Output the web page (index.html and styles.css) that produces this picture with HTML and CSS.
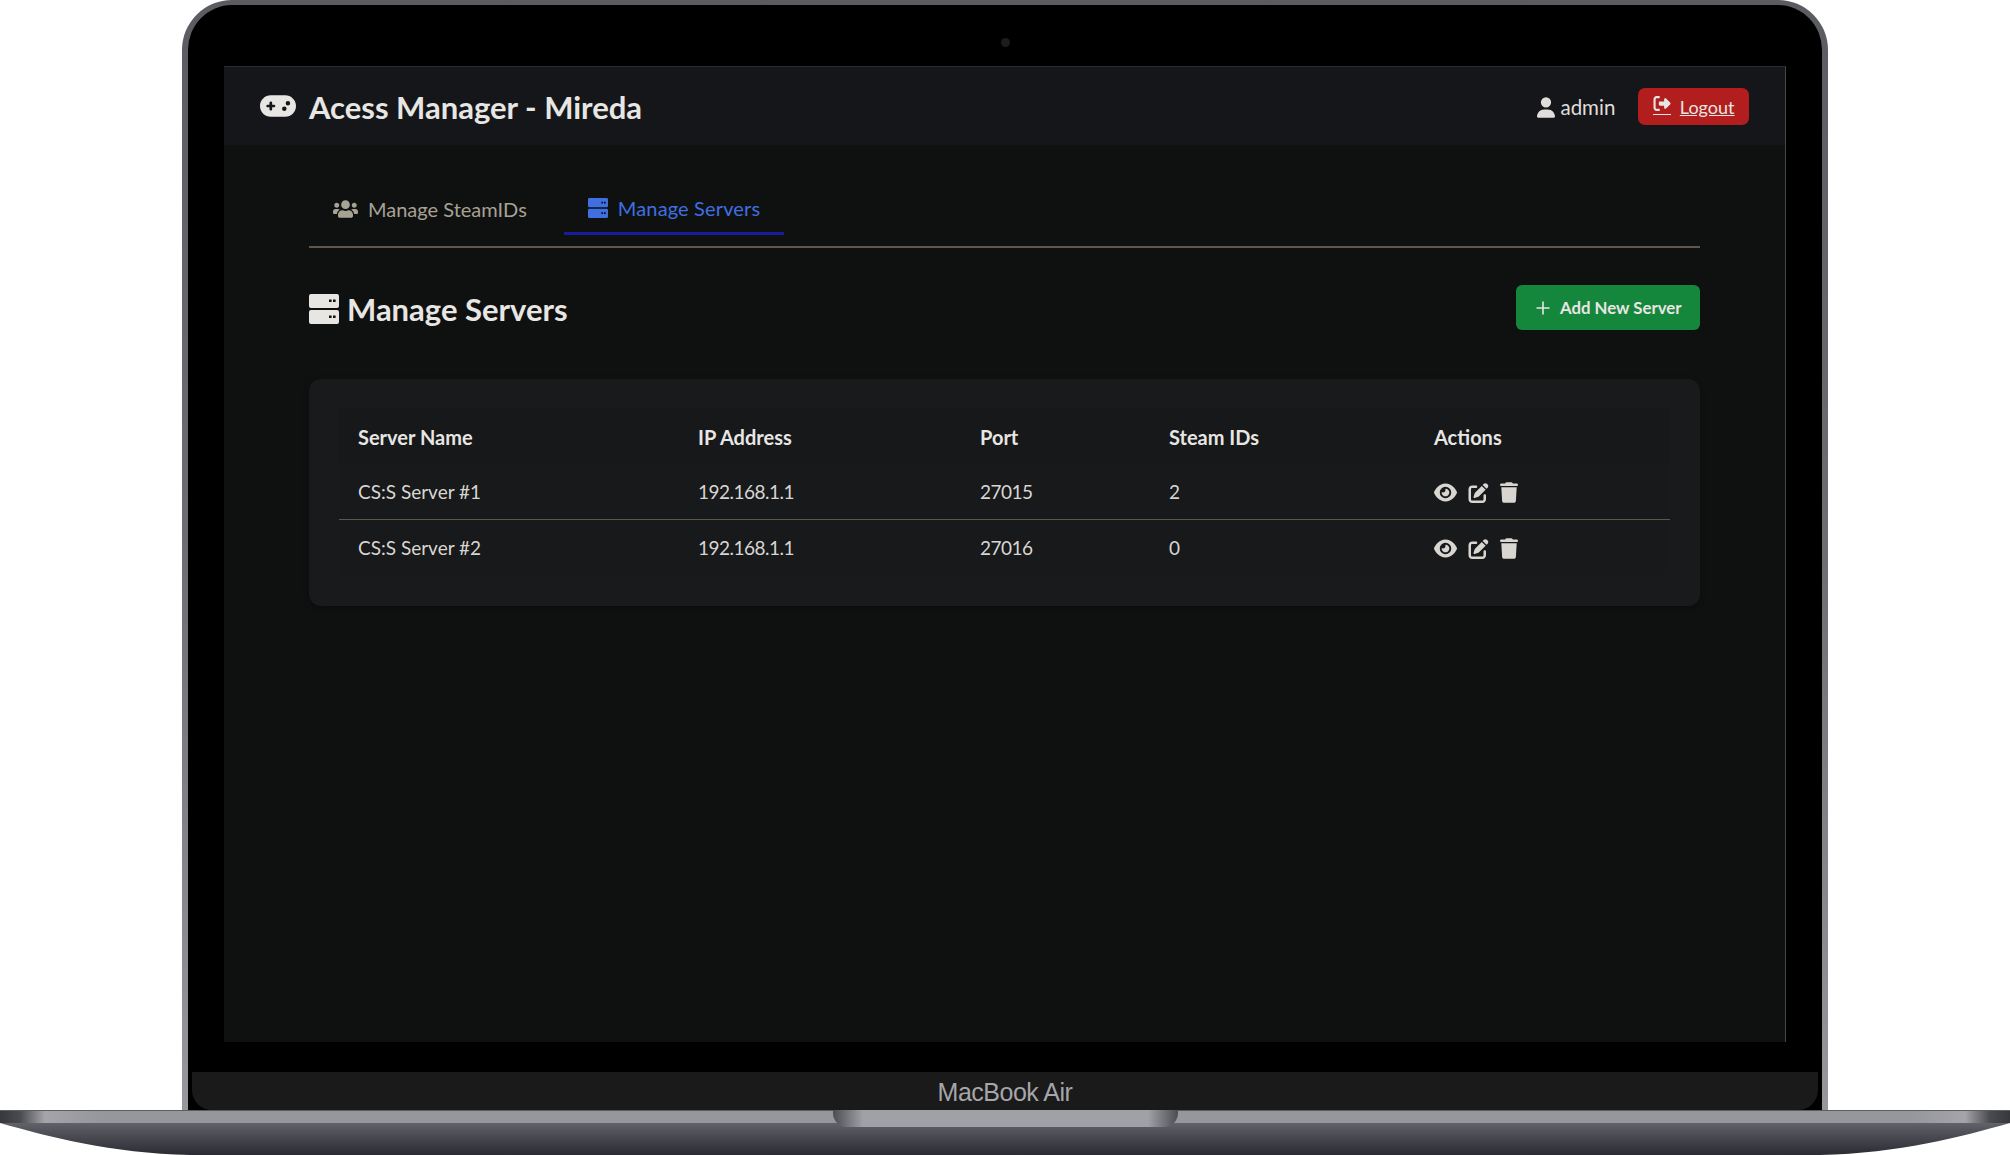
FILE: index.html
```html
<!DOCTYPE html>
<html>
<head>
  <title>Acess Manager - Mireda</title>
  <link rel="stylesheet" href="styles.css">
</head>
<body>
  <div class="lid">
    <div class="top-bezel"><span class="camera"></span></div>

    <main class="screen">
      <header class="topbar">
        <div class="brand">
          <svg class="brand-icon" viewBox="0 0 640 512"><path d="M192 64C86 64 0 150 0 256S86 448 192 448H448c106 0 192-86 192-192s-86-192-192-192H192zM496 168a40 40 0 1 1 0 80 40 40 0 1 1 0-80zM392 304a40 40 0 1 1 80 0 40 40 0 1 1 -80 0zM168 200c0-13.3 10.7-24 24-24s24 10.7 24 24v32h32c13.3 0 24 10.7 24 24s-10.7 24-24 24H216v32c0 13.3-10.7 24-24 24s-24-10.7-24-24V280H136c-13.3 0-24-10.7-24-24s10.7-24 24-24h32V200z"/></svg>
          <span>Acess Manager - Mireda</span>
        </div>
        <div class="account">
          <span class="user">
            <svg class="user-icon" viewBox="0 0 448 512"><path d="M224 256A128 128 0 1 0 224 0a128 128 0 1 0 0 256zm-45.7 48C79.8 304 0 383.8 0 482.3C0 498.7 13.3 512 29.7 512H418.3c16.4 0 29.7-13.3 29.7-29.7C448 383.8 368.2 304 269.7 304H178.3z"/></svg>
            admin
          </span>
          <a class="logout" href="#">
            <span class="logout-icon"><svg viewBox="0 0 512 512"><path d="M377.9 105.9L500.7 228.7c7.2 7.2 11.3 17.1 11.3 27.3s-4.1 20.1-11.3 27.3L377.9 406.1c-6.4 6.4-15 9.9-24 9.9c-18.7 0-33.9-15.2-33.9-33.9l0-62.1-128 0c-17.7 0-32-14.3-32-32l0-64c0-17.7 14.3-32 32-32l128 0 0-62.1c0-18.7 15.2-33.9 33.9-33.9c9 0 17.6 3.6 24 9.9zM160 96L96 96c-17.7 0-32 14.3-32 32l0 256c0 17.7 14.3 32 32 32l64 0c17.7 0 32 14.3 32 32s-14.3 32-32 32l-64 0c-53 0-96-43-96-96L0 128C0 75 43 32 96 32l64 0c17.7 0 32 14.3 32 32s-14.3 32-32 32z"/></svg></span>
            <span class="logout-text">Logout</span>
          </a>
        </div>
      </header>

      <div class="content">
        <nav class="tabs">
          <a class="tab" href="#">
            <svg class="tab-icon users" viewBox="0 0 640 512"><path d="M96 224c35.3 0 64-28.7 64-64s-28.7-64-64-64-64 28.7-64 64 28.7 64 64 64zm448 0c35.3 0 64-28.7 64-64s-28.7-64-64-64-64 28.7-64 64 28.7 64 64 64zm32 32h-64c-17.6 0-33.5 7.1-45.1 18.6 40.3 22.1 68.9 62 75.1 109.4h66c17.7 0 32-14.3 32-32v-32c0-35.3-28.7-64-64-64zm-256 0c61.9 0 112-50.1 112-112S381.9 32 320 32 208 82.1 208 144s50.1 112 112 112zm76.8 32h-8.3c-20.8 10-43.9 16-68.5 16s-47.6-6-68.5-16h-8.3C179.6 288 128 339.6 128 403.2V432c0 26.5 21.5 48 48 48h288c26.5 0 48-21.5 48-48v-28.8c0-63.6-51.6-115.2-115.2-115.2zm-223.7-13.4C161.5 263.1 145.6 256 128 256H64c-35.3 0-64 28.7-64 64v32c0 17.7 14.3 32 32 32h65.9c6.3-47.4 34.9-87.3 75.2-109.4z"/></svg>
            Manage SteamIDs
          </a>
          <a class="tab active" href="#">
            <svg class="tab-icon server" viewBox="0 0 30 30"><path d="M2 0h26a2 2 0 0 1 2 2v10a2 2 0 0 1-2 2H2a2 2 0 0 1-2-2V2a2 2 0 0 1 2-2zM20 5.5v2.6h2.6V5.5zM24 5.5v2.6h2.6V5.5zM2 16h26a2 2 0 0 1 2 2v10a2 2 0 0 1-2 2H2a2 2 0 0 1-2-2V18a2 2 0 0 1 2-2zM20 21.5v2.6h2.6v-2.6zM24 21.5v2.6h2.6v-2.6z"/></svg>
            Manage Servers
          </a>
        </nav>

        <div class="page-head">
          <h1>
            <svg class="head-icon server" viewBox="0 0 30 30"><path d="M2 0h26a2 2 0 0 1 2 2v10a2 2 0 0 1-2 2H2a2 2 0 0 1-2-2V2a2 2 0 0 1 2-2zM20 5.5v2.6h2.6V5.5zM24 5.5v2.6h2.6V5.5zM2 16h26a2 2 0 0 1 2 2v10a2 2 0 0 1-2 2H2a2 2 0 0 1-2-2V18a2 2 0 0 1 2-2zM20 21.5v2.6h2.6v-2.6zM24 21.5v2.6h2.6v-2.6z"/></svg>
            <span>Manage Servers</span>
          </h1>
          <button class="add-btn">
            <svg class="plus" viewBox="0 0 16 16"><path d="M8 1.5v13M1.5 8h13"/></svg>
            Add New Server
          </button>
        </div>

        <section class="card">
          <table>
            <thead>
              <tr>
                <th class="col-name">Server Name</th>
                <th class="col-ip">IP Address</th>
                <th class="col-port">Port</th>
                <th class="col-ids">Steam IDs</th>
                <th>Actions</th>
              </tr>
            </thead>
            <tbody>
              <tr>
                <td>CS:S Server #1</td>
                <td class="num">192.168.1.1</td>
                <td class="num">27015</td>
                <td class="num">2</td>
                <td>
                  <div class="actions">
                    <svg class="eye" viewBox="0 0 576 512"><path d="M288 32c-80.8 0-145.5 36.8-192.6 80.6C48.6 156 17.3 208 2.5 243.7c-3.3 7.9-3.3 16.7 0 24.6C17.3 304 48.6 356 95.4 399.4C142.5 443.2 207.2 480 288 480s145.5-36.8 192.6-80.6c46.8-43.5 78.1-95.4 93-131.1c3.3-7.9 3.3-16.7 0-24.6c-14.9-35.7-46.2-87.7-93-131.1C433.5 68.8 368.8 32 288 32zM144 256a144 144 0 1 1 288 0 144 144 0 1 1 -288 0zm144-64c0 35.3-28.7 64-64 64c-7.1 0-13.9-1.2-20.3-3.3c-5.5-1.8-11.9 1.6-11.7 7.4c.3 6.9 1.3 13.8 3.2 20.7c13.7 51.2 66.4 81.6 117.6 67.9s81.6-66.4 67.9-117.6c-11.1-41.5-47.8-69.4-88.6-71.1c-5.8-.2-9.2 6.1-7.4 11.7c2.1 6.4 3.3 13.2 3.3 20.3z"/></svg>
                    <svg class="edit" viewBox="0 0 512 512"><path d="M471.6 21.7c-21.9-21.9-57.3-21.9-79.2 0L362.3 51.7l97.9 97.9 30.1-30.1c21.9-21.9 21.9-57.3 0-79.2L471.6 21.7zm-299.2 220c-6.1 6.1-10.8 13.6-13.5 21.9l-29.6 88.8c-2.9 8.6-.6 18.1 5.8 24.6s15.9 8.7 24.6 5.8l88.8-29.6c8.2-2.7 15.7-7.4 21.9-13.5L437.7 172.3 339.7 74.3 172.4 241.7zM96 64C43 64 0 107 0 160V416c0 53 43 96 96 96H352c53 0 96-43 96-96V320c0-17.7-14.3-32-32-32s-32 14.3-32 32v96c0 17.7-14.3 32-32 32H96c-17.7 0-32-14.3-32-32V160c0-17.7 14.3-32 32-32h96c17.7 0 32-14.3 32-32s-14.3-32-32-32H96z"/></svg>
                    <svg class="trash" viewBox="0 0 448 512"><path d="M135.2 17.7L128 32H32C14.3 32 0 46.3 0 64S14.3 96 32 96H416c17.7 0 32-14.3 32-32s-14.3-32-32-32H320l-7.2-14.3C307.4 6.8 296.3 0 284.2 0H163.8c-12.1 0-23.2 6.8-28.6 17.7zM416 128H32L53.2 467c1.6 25.3 22.6 45 47.9 45H346.9c25.3 0 46.3-19.7 47.9-45L416 128z"/></svg>
                  </div>
                </td>
              </tr>
              <tr>
                <td>CS:S Server #2</td>
                <td class="num">192.168.1.1</td>
                <td class="num">27016</td>
                <td class="num">0</td>
                <td>
                  <div class="actions">
                    <svg class="eye" viewBox="0 0 576 512"><path d="M288 32c-80.8 0-145.5 36.8-192.6 80.6C48.6 156 17.3 208 2.5 243.7c-3.3 7.9-3.3 16.7 0 24.6C17.3 304 48.6 356 95.4 399.4C142.5 443.2 207.2 480 288 480s145.5-36.8 192.6-80.6c46.8-43.5 78.1-95.4 93-131.1c3.3-7.9 3.3-16.7 0-24.6c-14.9-35.7-46.2-87.7-93-131.1C433.5 68.8 368.8 32 288 32zM144 256a144 144 0 1 1 288 0 144 144 0 1 1 -288 0zm144-64c0 35.3-28.7 64-64 64c-7.1 0-13.9-1.2-20.3-3.3c-5.5-1.8-11.9 1.6-11.7 7.4c.3 6.9 1.3 13.8 3.2 20.7c13.7 51.2 66.4 81.6 117.6 67.9s81.6-66.4 67.9-117.6c-11.1-41.5-47.8-69.4-88.6-71.1c-5.8-.2-9.2 6.1-7.4 11.7c2.1 6.4 3.3 13.2 3.3 20.3z"/></svg>
                    <svg class="edit" viewBox="0 0 512 512"><path d="M471.6 21.7c-21.9-21.9-57.3-21.9-79.2 0L362.3 51.7l97.9 97.9 30.1-30.1c21.9-21.9 21.9-57.3 0-79.2L471.6 21.7zm-299.2 220c-6.1 6.1-10.8 13.6-13.5 21.9l-29.6 88.8c-2.9 8.6-.6 18.1 5.8 24.6s15.9 8.7 24.6 5.8l88.8-29.6c8.2-2.7 15.7-7.4 21.9-13.5L437.7 172.3 339.7 74.3 172.4 241.7zM96 64C43 64 0 107 0 160V416c0 53 43 96 96 96H352c53 0 96-43 96-96V320c0-17.7-14.3-32-32-32s-32 14.3-32 32v96c0 17.7-14.3 32-32 32H96c-17.7 0-32-14.3-32-32V160c0-17.7 14.3-32 32-32h96c17.7 0 32-14.3 32-32s-14.3-32-32-32H96z"/></svg>
                    <svg class="trash" viewBox="0 0 448 512"><path d="M135.2 17.7L128 32H32C14.3 32 0 46.3 0 64S14.3 96 32 96H416c17.7 0 32-14.3 32-32s-14.3-32-32-32H320l-7.2-14.3C307.4 6.8 296.3 0 284.2 0H163.8c-12.1 0-23.2 6.8-28.6 17.7zM416 128H32L53.2 467c1.6 25.3 22.6 45 47.9 45H346.9c25.3 0 46.3-19.7 47.9-45L416 128z"/></svg>
                  </div>
                </td>
              </tr>
            </tbody>
          </table>
        </section>
      </div>
    </main>

    <div class="chin">MacBook Air</div>
  </div>

  <div class="base">
    <div class="base-strip"></div>
    <div class="base-body"></div>
    <div class="notch"></div>
  </div>
</body>
</html>
```

FILE: styles.css
```css
html {
  background-color: #fff;
}

body {
  color: #e8e6e3;
  font: 20px/1.5 "Lato", "Open Sans", sans-serif;
  height: 1155px;
  margin: 0;
  overflow: hidden;
}

svg {
  display: block;
  fill: currentColor;
  flex: none;
}

a {
  color: inherit;
  text-decoration: none;
}

/* laptop frame */

.lid {
  background: linear-gradient(#000, #000) padding-box, linear-gradient(180deg, #5b5c61 0, #6d6e72 50%, #97989c 100%) border-box;
  border: solid transparent;
  border-width: 5px 6px 0;
  border-radius: 50px 50px 0 0;
  box-sizing: border-box;
  display: flex;
  flex-direction: column;
  height: 1110px;
  margin: 0 182px;
}

.top-bezel {
  align-items: center;
  box-sizing: border-box;
  display: flex;
  flex: none;
  height: 61px;
  justify-content: center;
  padding-top: 13px;
}

.camera {
  background-color: #1b1c20;
  border-radius: 50%;
  height: 9px;
  width: 9px;
}

.screen {
  background-color: #0f1111;
  border-right: 1px solid #45464a;
  border-top: 1px solid #2b2c30;
  box-sizing: border-box;
  display: flex;
  flex: none;
  flex-direction: column;
  height: 976px;
  margin: 0 36px;
}

.chin {
  background-color: #1a1a1a;
  border-radius: 0 0 20px 20px;
  color: #a6a6aa;
  flex: none;
  font: 25px/40px "Liberation Sans", sans-serif;
  height: 38px;
  letter-spacing: -0.5px;
  margin: 30px 4px 0;
  text-align: center;
}

.base {
  height: 45px;
  position: relative;
}

.base-strip {
  background: linear-gradient(90deg, #37383d 0, #4a4b50 20px, #a4a4aa 45px, #96979c 100px, #96979c 1910px, #a4a4aa 1965px, #4a4b50 1990px, #37383d 2010px);
  border-top: 1px solid #5c5d61;
  box-sizing: border-box;
  height: 13px;
}

.base-body {
  background: linear-gradient(180deg, #626369 0, #4b4c54 12px, #2b2c33 32px);
  clip-path: path("M0 0H2010C1960 14 1900 30 1820 32H190C110 30 50 14 0 0Z");
  height: 32px;
}

.notch {
  background: linear-gradient(90deg, #4c4d52 0, #a0a1a6 30px, #a0a1a6 315px, #4c4d52 345px);
  border-radius: 0 0 14px 14px;
  height: 17px;
  left: 833px;
  position: absolute;
  top: 0;
  width: 345px;
}

/* app header */

.topbar {
  align-items: center;
  background-color: #14161a;
  box-sizing: border-box;
  display: flex;
  flex: none;
  height: 78px;
  justify-content: space-between;
  padding: 0 36px;
}

.brand {
  align-items: center;
  display: flex;
  font-size: 31px;
  font-weight: 700;
  gap: 13px;
}

.brand span {
  padding-top: 2px;
}

.brand-icon {
  height: 30px;
  width: 36px;
}

.account {
  align-items: center;
  display: flex;
  gap: 23px;
}

.user {
  align-items: center;
  color: #e0dedb;
  display: flex;
  font-size: 20.5px;
  gap: 5px;
  padding-top: 2px;
}

.user-icon {
  height: 21px;
  width: 18px;
}

.logout {
  align-items: center;
  background-color: #b21e1e;
  border-radius: 7px;
  box-sizing: border-box;
  display: flex;
  font-size: 18px;
  gap: 9px;
  height: 37px;
  padding: 0 14.5px;
}

.logout-icon {
  border-bottom: 1px solid currentColor;
  display: block;
  margin-top: -3px;
  padding-bottom: 2px;
}

.logout-icon svg {
  height: 17px;
  width: 18px;
}

.logout-text {
  padding-top: 2px;
  text-decoration: underline;
}

/* page */

.content {
  display: flex;
  flex-direction: column;
  padding: 0 85px;
}

.tabs {
  border-bottom: 2px solid #5f574c;
  display: flex;
  gap: 13px;
  padding: 40px 0 11px;
}

.tab {
  align-items: center;
  border-bottom: 3px solid transparent;
  color: #a8a295;
  display: flex;
  font-size: 20px;
  gap: 10px;
  height: 47px;
  padding: 0 24px;
}

.tab.active {
  border-bottom-color: #1a1a9c;
  color: #3f6fe0;
  height: 45px;
  letter-spacing: 0.15px;
  padding-bottom: 2px;
}

.tab-icon {
  height: 20px;
  width: 20px;
}

.tab-icon.users {
  width: 25px;
}

.server {
  fill-rule: evenodd;
}

.page-head {
  align-items: center;
  display: flex;
  justify-content: space-between;
  margin-top: 37px;
}

h1 {
  align-items: center;
  display: flex;
  font-size: 31px;
  font-weight: 700;
  gap: 8px;
  line-height: 1.2;
  margin: 0;
}

h1 span {
  padding-top: 4px;
}

.head-icon {
  height: 30px;
  margin-top: 2px;
  width: 30px;
}

.add-btn {
  align-items: center;
  background-color: #15873d;
  border: 0;
  border-radius: 6px;
  color: #e8e6e3;
  display: flex;
  font: 700 16.8px "Lato", sans-serif;
  gap: 9px;
  height: 45px;
  padding: 0 18.5px;
}

.plus {
  fill: none;
  height: 16px;
  stroke: currentColor;
  stroke-width: 1.6;
  width: 16px;
}

.card {
  background-color: #181a1c;
  border-radius: 12px;
  box-shadow: 0 2px 6px rgba(0, 0, 0, .3);
  margin-top: 49px;
  padding: 29px 30px 31px;
}

table {
  background-color: #16181a;
  border-collapse: collapse;
  table-layout: fixed;
  width: 100%;
}

th,
td {
  font-size: 20px;
  padding: 2px 19px 0;
  text-align: left;
}

th {
  font-weight: 700;
  height: 54px;
}

td {
  color: #d9d6d2;
  font-size: 19px;
  height: 53px;
}

td.num {
  letter-spacing: -0.5px;
}

tbody tr {
  background-color: #17191b;
}

tbody tr:first-child {
  border-bottom: 1px solid #5f574c;
}

.col-name {
  width: 302px;
}

.col-ip {
  width: 244px;
}

.col-port {
  width: 151px;
}

.col-ids {
  width: 227px;
}

.actions {
  align-items: center;
  display: flex;
  gap: 11px;
}

.eye {
  height: 21px;
  width: 23px;
}

.edit {
  height: 20px;
  width: 21px;
}

.trash {
  height: 21px;
  width: 18px;
}
```
